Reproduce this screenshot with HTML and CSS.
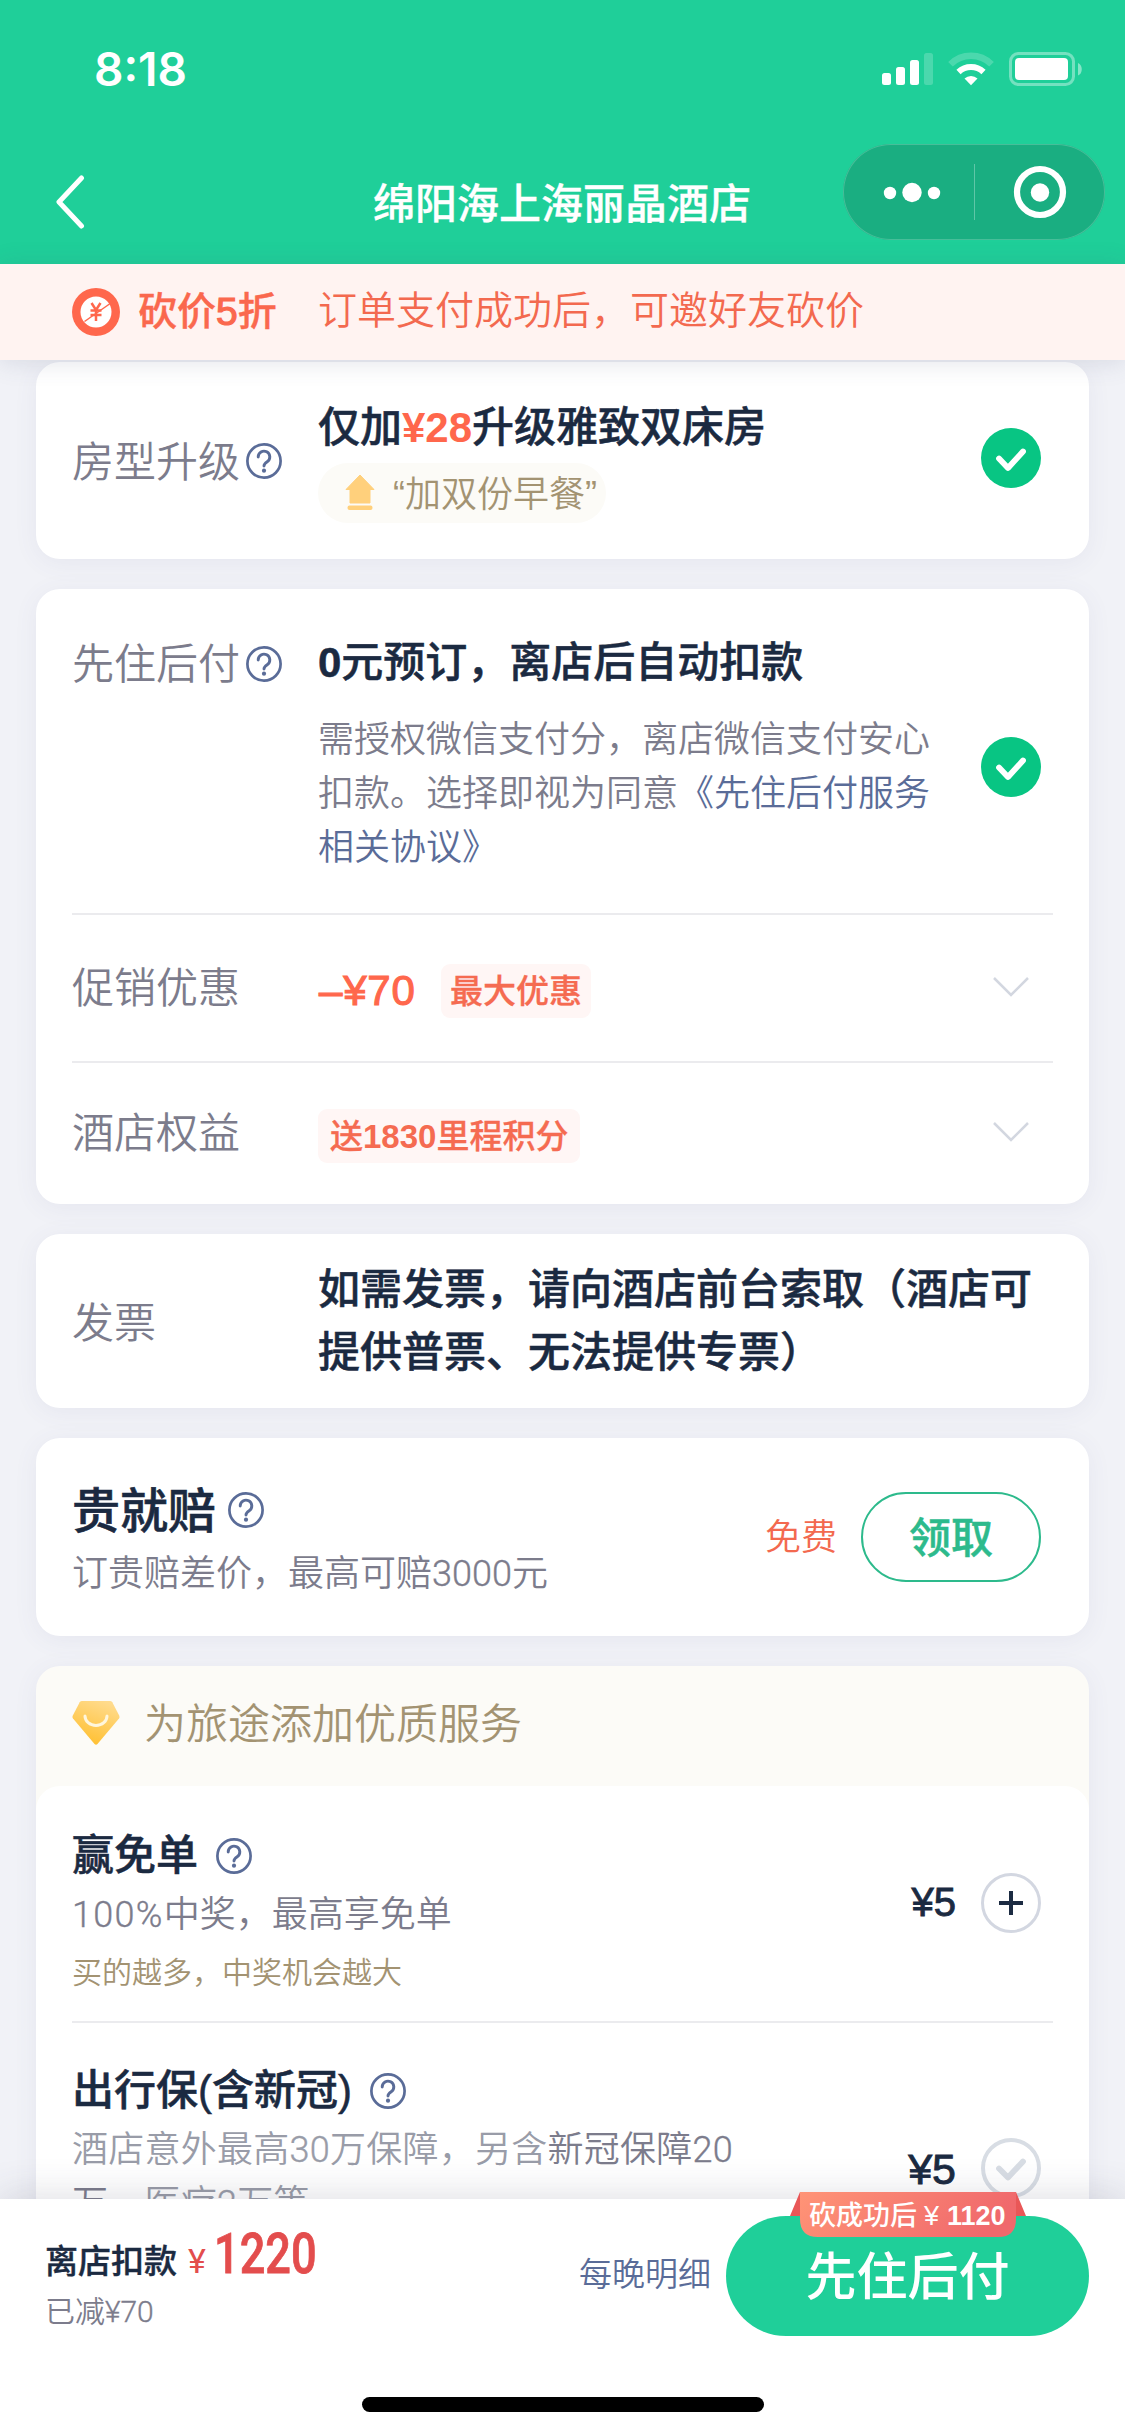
FILE: index.html
```html
<!DOCTYPE html>
<html lang="zh-CN">
<head>
<meta charset="utf-8">
<title>绵阳海上海丽晶酒店</title>
<link rel="stylesheet" href="styles.css">
</head>
<body>
<svg width="0" height="0" class="defs">
  <symbol id="help" viewBox="0 0 36 36"><circle cx="18" cy="18" r="16.6" fill="none" stroke="#5a6c98" stroke-width="2.7"/><path d="M12.2 14a5.800 5.800 0 1 1 9 4.800c-2 1.300-3.200 2.200-3.200 4.300" fill="none" stroke="#5a6c98" stroke-width="2.900" stroke-linecap="round"/><circle cx="18" cy="27.700" r="2.100" fill="#5a6c98"/></symbol>
  <symbol id="checked" viewBox="0 0 60 60"><circle cx="30" cy="30" r="30" fill="#08c583"/><path d="M18 30.500l9 9.500 15-16.500" fill="none" stroke="#fff" stroke-width="5.800" stroke-linecap="round" stroke-linejoin="round"/></symbol>
  <symbol id="unchecked" viewBox="0 0 60 60"><circle cx="30" cy="30" r="28" fill="none" stroke="#d8dde4" stroke-width="4"/><path d="M18 30.500l9 9 15-16" fill="none" stroke="#d8dde4" stroke-width="5.800" stroke-linecap="round" stroke-linejoin="round"/></symbol>
  <symbol id="plus" viewBox="0 0 60 60"><circle cx="30" cy="30" r="28.500" fill="none" stroke="#d3d7e1" stroke-width="3"/><path d="M30 18v24M18 30h24" stroke="#1c2b42" stroke-width="4"/></symbol>
  <symbol id="down" viewBox="0 0 38 22"><path d="M2 2l17 17 17-17" fill="none" stroke="#d3d7e0" stroke-width="2.500"/></symbol>
</svg>
<div class="phone">
  <header class="top">
    <div class="status">
      <span class="time">8:18</span>
      <svg class="signals" width="204" height="36" viewBox="0 0 204 36">
        <g fill="#fff"><rect x="2" y="21" width="9" height="12" rx="2.500"/><rect x="16" y="15" width="9" height="18" rx="2.500"/><rect x="30" y="8" width="9" height="25" rx="2.500"/><rect x="44" y="1" width="9" height="32" rx="2.500" opacity=".2"/></g>
        <g fill="none" stroke="#fff"><path d="M70.500 12.200a29 29 0 0 1 41 0" stroke-width="6.500" opacity=".2"/><path d="M78.500 20a18 18 0 0 1 25 0" stroke-width="6"/></g>
        <path d="M84.500 26.500a9.500 9.500 0 0 1 13 0l-6.500 6.800z" fill="#fff"/>
        <rect x="130.500" y="1.500" width="63" height="31" rx="8" fill="none" stroke="#fff" stroke-width="3" opacity=".38"/>
        <rect x="135" y="6" width="53" height="22" rx="4" fill="#fff"/><path d="M198 11c5 1.500 5 11 0 12.500z" fill="#fff" opacity=".45"/>
      </svg>
    </div>
    <div class="nav">
      <svg class="back" width="30" height="54" viewBox="0 0 30 54"><path d="M26.500 3L4 27l22.500 24" fill="none" stroke="#fff" stroke-width="5" stroke-linecap="round" stroke-linejoin="round"/></svg>
      <h1>绵阳海上海丽晶酒店</h1>
      <div class="capsule">
        <svg width="262" height="96" viewBox="0 0 262 96"><g fill="#fff"><circle cx="47" cy="49" r="6.200"/><circle cx="69" cy="48.500" r="9.700"/><circle cx="91" cy="49" r="6.200"/><circle cx="197" cy="48.500" r="9.200"/></g><circle cx="197" cy="48" r="23" fill="none" stroke="#fff" stroke-width="6.200"/><path d="M131.500 20v56" stroke="#fff" opacity=".3"/></svg>
      </div>
    </div>
  </header>

  <div class="banner">
    <svg width="48" height="48" viewBox="0 0 48 48"><circle cx="24" cy="24" r="24" fill="#ff674c"/><circle cx="24" cy="24" r="15.500" fill="#fff"/><path d="M19.500 15l4.500 7 4.500-7M24 22v11M18.500 22.500h11M18.500 27h11" fill="none" stroke="#ff674c" stroke-width="2.500"/><path d="M12.500 33.500L37.500 16" stroke="#ff674c" stroke-width="1.500"/></svg>
    <strong>砍价<i>5</i>折</strong><span>订单支付成功后，可邀好友砍价</span>
  </div>

  <main>
    <section class="card upgrade">
      <div class="label">房型升级<svg class="help"><use href="#help"/></svg></div>
      <div class="value">
        <h2>仅加<em>¥28</em>升级雅致双床房</h2>
        <div class="pill"><svg width="30" height="36" viewBox="0 0 30 36"><path d="M15 1l14 14.500h-4V29H5V15.500H1z" fill="#ffd07c" stroke="#ffd07c" stroke-linejoin="round"/><rect x="2.500" y="31.500" width="25" height="4.500" rx="2" fill="#ffd07c"/></svg><span>“加双份早餐”</span></div>
      </div>
      <svg class="round"><use href="#checked"/></svg>
    </section>

    <section class="card pay">
      <div class="row agree">
        <div class="label">先住后付<svg class="help"><use href="#help"/></svg></div>
        <div class="value">
          <h2><b>0</b>元预订，离店后自动扣款</h2>
          <p>需授权微信支付分，离店微信支付安心扣款。选择即视为同意<a>《先住后付服务相关协议》</a></p>
        </div>
        <svg class="round"><use href="#checked"/></svg>
      </div>
      <div class="row promo">
        <div class="label">促销优惠</div>
        <div class="value"><b class="minus">–¥70</b><span class="tag">最大优惠</span></div>
        <svg class="down"><use href="#down"/></svg>
      </div>
      <div class="row rights">
        <div class="label">酒店权益</div>
        <div class="value"><span class="tag">送<b>1830</b>里程积分</span></div>
        <svg class="down"><use href="#down"/></svg>
      </div>
    </section>

    <section class="card invoice">
      <div class="label">发票</div>
      <h2>如需发票，请向酒店前台索取（酒店可提供普票、无法提供专票）</h2>
    </section>

    <section class="card claim">
      <div class="text">
        <h3>贵就赔<svg class="help"><use href="#help"/></svg></h3>
        <p>订贵赔差价，最高可赔<span class="digits">3000</span>元</p>
      </div>
      <span class="free">免费</span>
      <button class="get">领取</button>
    </section>

    <section class="card services">
      <div class="head">
        <svg width="48" height="46" viewBox="0 0 48 46"><defs><linearGradient id="gem" x1=".7" y1="0" x2=".3" y2="1"><stop offset="0" stop-color="#ffdb8d"/><stop offset="1" stop-color="#ffbf2e"/></linearGradient></defs><path d="M10 1h28q1.500 0 2.300 1.300l7 13.500q.7 1.500-.3 2.700L25.500 44q-1.500 1.500-3 0L1 18.500q-1-1.200-.3-2.700l7-13.500Q8.500 1 10 1z" fill="url(#gem)"/><path d="M13 16a11 9.500 0 0 0 22 0" fill="none" stroke="#fff6dc" stroke-width="3" stroke-linecap="round"/></svg>
        <span>为旅途添加优质服务</span>
      </div>
      <div class="items">
        <div class="item first">
          <div class="text">
            <h4>赢免单<svg class="help"><use href="#help"/></svg></h4>
            <p><span class="digits wide">100%</span>中奖，最高享免单</p>
            <small>买的越多，中奖机会越大</small>
          </div>
          <b class="price">¥5</b>
          <svg class="round"><use href="#plus"/></svg>
        </div>
        <div class="item second">
          <div class="text">
            <h4>出行保(含新冠)<svg class="help"><use href="#help"/></svg></h4>
            <p><i>酒店意外最高<span class="digits">30</span>万保障，另含</i>新冠保障<span class="digits">20</span>万、<i>医疗<span class="digits">2</span>万等</i></p>
          </div>
          <b class="price">¥5</b>
          <svg class="round"><use href="#unchecked"/></svg>
        </div>
      </div>
    </section>
  </main>

  <footer>
    <div class="bar">
      <div class="sum">
        <div class="total"><strong>离店扣款</strong><span class="yen">¥</span><span class="num">1220</span></div>
        <div class="saved">已减<span class="digits">¥70</span></div>
      </div>
      <a class="detail">每晚明细</a>
      <div class="submit">
        <span>先住后付</span>
        <div class="ribbon"><svg width="236" height="45" viewBox="0 0 236 45"><defs><linearGradient id="rib" x1="0" y1="0" x2="1" y2=".2"><stop offset="0" stop-color="#ff9476"/><stop offset="1" stop-color="#f0696c"/></linearGradient></defs><path d="M10 0L0 24h10zM226 0l10 24h-10z" fill="#e95757"/><path d="M10 0h216v27q0 18-18 18H28Q10 45 10 27z" fill="url(#rib)"/></svg><span>砍成功后<i>¥</i><b>1120</b></span></div>
      </div>
    </div>
    <div class="home"></div>
  </footer>
</div>
</body>
</html>
```
FILE: styles.css
```css
* { box-sizing: border-box; margin: 0; padding: 0; }
body {
  width: 1125px; height: 2436px; overflow: hidden;
  font-family: "Liberation Sans", "Noto Sans CJK SC", sans-serif;
  color: #1b2a41; background: #f1f2f7;
}
.defs { position: absolute; }
svg { display: block; flex: none; }
i, em { font-style: normal; }
.phone { width: 1125px; height: 2436px; display: flex; flex-direction: column; overflow: hidden; }
.top { height: 264px; background: #1fcf99; color: #fff; flex: none; }
.status { height: 144px; display: flex; justify-content: space-between; align-items: flex-start; padding: 40px 41px 0 94px; }
.time { font: 600 46px/58px Inter, sans-serif; }
.signals { margin-top: 12px; }
.nav { height: 120px; display: flex; align-items: flex-start; padding-left: 55px; }
.back { margin-top: 31px; }
h1 { font-size: 42px; line-height: 60px; font-weight: 500; margin: 31px 92px 0 288px; white-space: nowrap; -webkit-text-stroke: .3px; }
.capsule { width: 262px; height: 96px; border-radius: 48px; background: #1aae81; box-shadow: inset 0 0 0 1px #47be99; }

.banner { height: 96px; background: #fff3f1; color: #f3694f; display: flex; align-items: center; padding: 0 0 1px 72px; font-size: 39px; flex: none; position: relative; box-shadow: 0 2px 24px rgba(70,80,120,.16); z-index: 1; }
.banner strong { font-weight: 500; color: #fa684e; margin-left: 18px; width: 180px; line-height: 56px; -webkit-text-stroke: .4px; }
.banner i { -webkit-text-stroke: 1.2px; }
.banner span { line-height: 56px; font-weight: 350; padding-bottom: 1px; }

main { height: 1839px; overflow: hidden; padding: 2px 36px 0; display: flex; flex-direction: column; gap: 30px; flex: none; }
.card { background: #fff; border-radius: 24px; box-shadow: 0 4px 24px rgba(90,90,140,.07); flex: none; padding: 0 36px; }
.label { width: 246px; flex: none; display: flex; align-items: center; font-size: 42px; line-height: 60px; color: #7c7c8c; font-weight: 350; padding-top: 2px; }
.help { width: 36px; height: 36px; }
.label .help { margin: -3px 0 0 6px; }
.value { width: 614px; flex: none; }
h2 { font-size: 42px; font-weight: 500; line-height: 60px; white-space: nowrap; -webkit-text-stroke: .5px; }
h2 em { color: #ff674c; font-weight: 700; -webkit-text-stroke: 0; }
.round { width: 60px; height: 60px; }
p { font-size: 36px; line-height: 54px; font-weight: 350; color: #7c7c8c; }
p a { color: #5a6c98; }
.digits { font-family: Roboto, "Liberation Sans", sans-serif; font-weight: 300; -webkit-text-stroke: .35px; line-height: 1; }
.wide { letter-spacing: 1.3px; }

.upgrade { height: 197px; display: flex; }
.upgrade .label { padding-top: 4px; }
.upgrade .value { padding-top: 36px; }
.upgrade .round { margin: 66px 0 0 49px; }
.pill { width: 288px; height: 60px; border-radius: 30px; background: #fcfbf7; color: #a39372; display: flex; align-items: center; padding-left: 27px; gap: 18px; font-size: 36px; font-weight: 350; margin-top: 5px; white-space: nowrap; }
.pill span { padding-bottom: 5px; }
.pill svg { margin-top: -3px; }

.pay { height: 615px; }
.agree { height: 326px; display: flex; border-bottom: 2px solid #ebebee; }
.agree .label { height: 60px; margin-top: 45px; }
.agree .value { padding-top: 44px; }
.agree p { margin-top: 20px; }
.agree .round { margin: 148px 0 0 49px; }
.promo, .rights { display: flex; align-items: center; }
.promo { height: 148px; border-bottom: 2px solid #ebebee; }
.rights { height: 140px; }
.promo .value, .rights .value { display: flex; align-items: center; padding-top: 6px; }
.minus { color: #ff674c; font-size: 42px; font-weight: 400; -webkit-text-stroke: 1.1px #ff674c; width: 122px; margin-left: 1px; line-height: 54px; letter-spacing: .8px; }
.tag { height: 54px; line-height: 55px; font-size: 33px; font-weight: 500; color: #f56b51; background: #fff6f5; border-radius: 9px; padding: 0 9px; white-space: nowrap; -webkit-text-stroke: .3px; }
.tag b { -webkit-text-stroke: 0; }
.rights .tag { padding: 0 12px; }
.down { width: 38px; height: 22px; margin: -3px 0 0 60px; }

.invoice { height: 174px; display: flex; align-items: center; }
.invoice .label { padding-top: 6px; }
.invoice h2 { width: 720px; line-height: 63px; white-space: normal; }

.claim { height: 198px; display: flex; align-items: center; padding-right: 48px; }
.text { flex: 1; padding-top: 4px; }
h3 { display: flex; align-items: center; gap: 12px; font-size: 48px; line-height: 68px; font-weight: 500; -webkit-text-stroke: .6px; }
h3 .help, h4 .help { margin-top: -4px; }
.claim p { line-height: 54px; margin-top: 1px; }
.free { color: #f3694f; font-size: 36px; font-weight: 350; margin-right: 24px; padding-bottom: 6px; }
.get { width: 180px; height: 90px; border: 2px solid #2dba8c; border-radius: 45px; background: #fff; color: #2dba8c; font: 500 42px "Noto Sans CJK SC", sans-serif; padding-bottom: 5px; -webkit-text-stroke: .5px; }

.services { height: 620px; background: #fcfbf7; padding: 0; }
.head { height: 120px; display: flex; align-items: center; padding: 0 36px 6px; gap: 24px; color: #a39372; font-size: 42px; font-weight: 350; }
.head span { padding-bottom: 5px; }
.items { height: 500px; background: #fff; border-radius: 24px 24px 0 0; padding: 0 36px; }
.item { display: flex; align-items: center; padding-right: 12px; }
.first { height: 237px; border-bottom: 2px solid #ebebee; }
.first .text { padding-top: 14px; }
.first .round { margin-top: -2px; }
h4 { display: flex; align-items: center; gap: 18px; font-size: 42px; line-height: 60px; font-weight: 500; -webkit-text-stroke: .5px; }
.first h4 .help { margin-top: 0; }
.first p { line-height: 54px; margin-top: 2px; }
small { display: block; font-size: 30px; line-height: 44px; font-weight: 350; color: #a39372; margin-top: 9px; }
.price { font-size: 40px; font-weight: 400; -webkit-text-stroke: .9px #1b2a41; margin-right: 25px; line-height: 48px; }
.first .price { margin-top: -4px; }
.second { align-items: flex-start; }
.second .text { padding-top: 38px; }
.second h4 .help { margin-top: -1px; }
.second .price { font-size: 43px; margin-top: 122px; }
.second .round { margin-top: 115px; }
.second p { width: 670px; letter-spacing: .25px; margin-top: 2px; }
.second p i { color: #999ca8; }

footer { height: 237px; background: #fff; position: relative; z-index: 2; flex: none; box-shadow: 0 -4px 36px rgba(60,60,90,.16); }
.bar { display: flex; height: 160px; padding: 17px 36px 0 45px; }
.sum { width: 534px; }
.total { display: flex; align-items: baseline; line-height: 56px; height: 56px; margin-top: 10px; }
.total strong { font-size: 33px; font-weight: 500; -webkit-text-stroke: .4px; }
.yen { font: 400 34px Roboto, sans-serif; color: #e34d4d; margin: 0 8px 0 11px; }
.num { font: 500 55px/56px Roboto, sans-serif; color: #e34d4d; transform: scaleX(.82); transform-origin: 0 50%; -webkit-text-stroke: .8px; }
.saved { font-size: 30px; line-height: 44px; font-weight: 350; color: #7c7c8c; margin-top: 8px; }
.detail { width: 147px; font-size: 33px; font-weight: 350; color: #5a6c98; line-height: 48px; padding-top: 35px; white-space: nowrap; }
.submit { width: 363px; height: 120px; border-radius: 60px; background: #1fcf99; position: relative; display: flex; justify-content: center; font-size: 51px; line-height: 123px; font-weight: 500; color: #fff; }
.ribbon { position: absolute; left: 64px; top: -24px; width: 236px; height: 45px; }
.ribbon span { position: absolute; left: 19px; top: 0; font-size: 27px; line-height: 49px; white-space: nowrap; display: flex; font-weight: 500; }
.ribbon i { margin: 0 8px 0 7px; }
.ribbon b { font-size: 27px; }
.home { width: 402px; height: 15px; border-radius: 8px; background: #000; margin: 38px auto 0; }
```
